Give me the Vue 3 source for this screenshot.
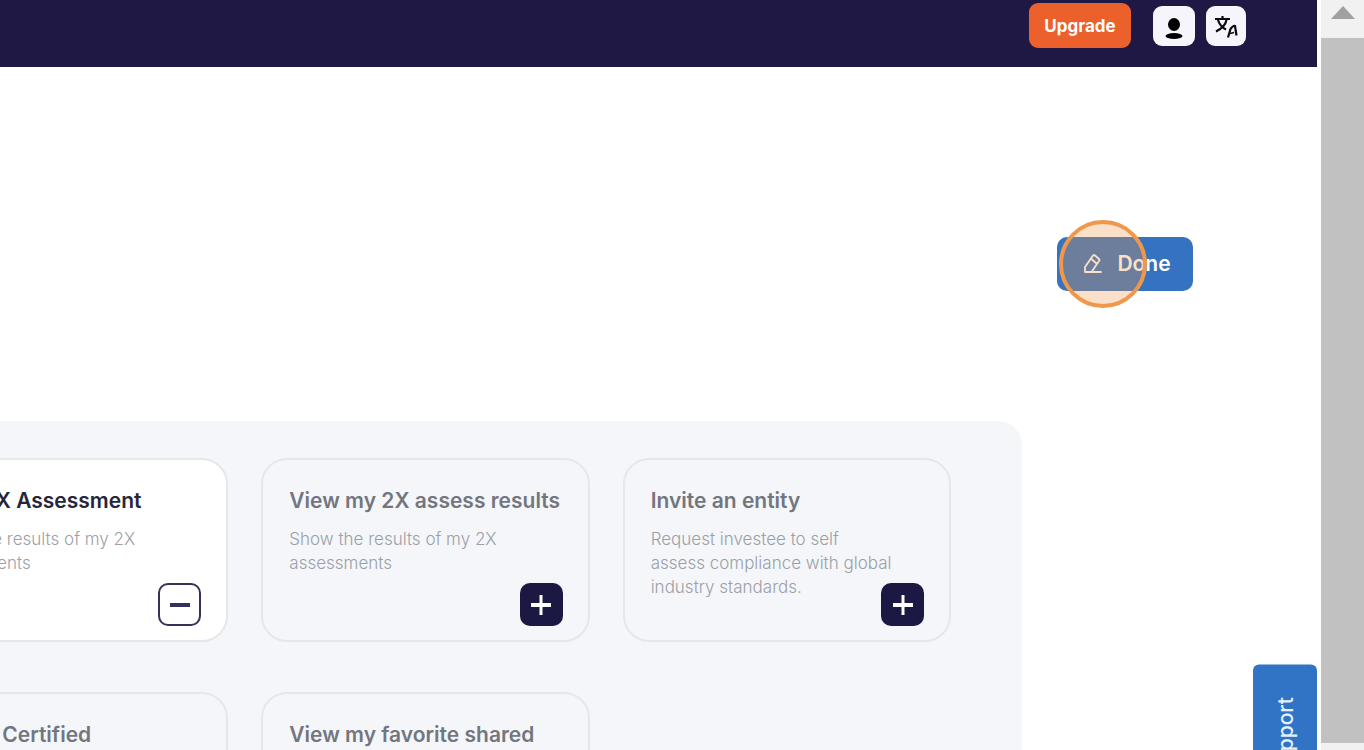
<template>
  <div class="window">
    <div class="app">
      <header class="topbar">
        <button class="upgrade" type="button">Upgrade</button>
        <button class="icon-btn profile" type="button" aria-label="Profile">
          <svg width="20" height="26" viewBox="0 0 20 26">
            <ellipse cx="10" cy="9.5" rx="6" ry="6.5" />
            <ellipse cx="10" cy="21" rx="8.5" ry="3" />
          </svg>
        </button>
        <button class="icon-btn" type="button" aria-label="Language">
          <svg width="26" height="26" viewBox="0 0 26 26" fill="none" stroke="#0b0b0f">
            <path d="M2 6h15M9.500 3v3M5 7c1.500 5 5 8 8 9.500M13.500 7C12.500 12 8 16 3 18.500" stroke-width="2.2" />
            <path d="M15 24.500l2.500-8.500q3-4 4.500-3l1.500 9.500" stroke-width="2.2" />
            <path d="M17 20.500l4-1" stroke-width="1.6" />
          </svg>
        </button>
      </header>

      <main class="content">
        <div class="toolbar">
          <div class="done-wrap">
            <button class="done" type="button" @click="editing = !editing">
              <svg width="20" height="22" viewBox="0 0 20 22" fill="none" stroke="currentColor" stroke-width="1.8" stroke-linejoin="round" stroke-linecap="round">
                <path d="M2 20v-5L10 3.500q1-1 2 0l4 3.500q1 1 0 2L8.500 20zM8.500 7l5 4.500M8.500 20H18" />
              </svg>
              <span>Done</span>
            </button>
            <span class="click-ring"></span>
          </div>
        </div>

        <section class="panel">
          <article v-for="card in cards" :key="card.title" class="card" :class="{ selected: card.selected }">
            <h2>{{ card.title }}</h2>
            <p>{{ card.text }}</p>
            <button
              class="toggle"
              type="button"
              :aria-label="card.selected ? 'Remove' : 'Add'"
              @click="card.selected = !card.selected"
            >
              <svg width="20" height="20" viewBox="0 0 20 20" fill="none" stroke="currentColor" stroke-width="4">
                <path d="M0 10h20" />
                <path v-if="!card.selected" d="M10 0v20" stroke-width="3" />
              </svg>
            </button>
          </article>
        </section>
      </main>

      <button class="support" type="button">Support</button>
    </div>

    <div class="scrollbar">
      <svg class="arrow" width="26" height="14" viewBox="0 0 26 14"><path d="M13 0l12 13H1z" fill="#a0a0a0" /></svg>
      <div class="thumb"></div>
    </div>
  </div>
</template>

<script setup>
import { ref } from 'vue'

const editing = ref(true)

const cards = ref([
  { title: 'Start 2X Assessment', text: 'Show the results of my 2X\nassessments', selected: true },
  { title: 'View my 2X assess results', text: 'Show the results of my 2X\nassessments', selected: false },
  { title: 'Invite an entity', text: 'Request investee to self\nassess compliance with global\nindustry standards.', selected: false },
  { title: 'Get 2X Certified', text: '', selected: false },
  { title: 'View my favorite shared', text: '', selected: false }
])
</script>

<style>
body {
  margin: 0;
  background: #fff;
}
</style>

<style scoped>
.window {
  display: flex;
  height: 100vh;
  overflow: hidden;
  font-family: Inter, "Open Sans", sans-serif;
}

.window * {
  box-sizing: border-box;
}

button {
  font-family: inherit;
  border: 0;
  padding: 0;
  cursor: pointer;
}

.app {
  position: relative;
  flex: 1;
  min-width: 0;
  margin-right: 4px;
  overflow: hidden;
}

/* header */
.topbar {
  display: flex;
  align-items: center;
  justify-content: flex-end;
  height: 67px;
  padding: 0 71px 16px 0;
  background: #1f1744;
}

.upgrade {
  width: 102px;
  height: 45px;
  margin-right: 22px;
  border-radius: 9px;
  background: #ec602b;
  color: #fff;
  font-size: 17px;
  font-weight: 700;
}

.icon-btn {
  display: flex;
  align-items: center;
  justify-content: center;
  width: 40px;
  height: 40px;
  border-radius: 9px;
  background: #f5f5fb;
}

.profile {
  width: 42px;
  margin-right: 11px;
  padding-top: 4px;
}

/* done button */
.toolbar {
  display: flex;
  justify-content: flex-end;
  padding: 170px 124px 130px 0;
}

.done-wrap {
  position: relative;
}

.done {
  display: flex;
  align-items: center;
  justify-content: center;
  gap: 14px;
  width: 136px;
  height: 54px;
  padding: 0 0 2px 4px;
  border-radius: 10px;
  background: #3572c0;
  color: #fff;
  font-size: 21px;
  font-weight: 600;
}

.click-ring {
  position: absolute;
  top: -17px;
  left: 2px;
  width: 88px;
  height: 88px;
  border: 4px solid #ef974a;
  border-radius: 50%;
  background: rgba(239, 151, 74, 0.3);
  pointer-events: none;
}

/* cards */
.panel {
  display: grid;
  grid-template-columns: repeat(3, 1fr);
  gap: 50px 33px;
  margin: 0 295px 0 -171px;
  padding: 37px 71px;
  border-radius: 24px;
  background: #f4f6fa;
}

.card {
  position: relative;
  min-height: 184px;
  padding: 26px 25px 14px 26px;
  border: 2px solid #e6e7eb;
  border-radius: 26px;
}

.card.selected {
  background: #fff;
}

h2 {
  margin: 0;
  color: #73767e;
  font-size: 21px;
  font-weight: 600;
  line-height: 30px;
  white-space: nowrap;
}

.selected h2 {
  color: #25263a;
}

p {
  margin: 11px 0 0;
  color: #9c9fa6;
  font-size: 17px;
  font-weight: 300;
  line-height: 24px;
  white-space: pre;
}

.toggle {
  position: absolute;
  right: 25px;
  bottom: 14px;
  display: flex;
  align-items: center;
  justify-content: center;
  width: 43px;
  height: 43px;
  border-radius: 10px;
  background: #1b1843;
  color: #fff;
}

.selected .toggle {
  border: 2px solid #35325a;
  background: #fff;
  color: #35325a;
}

/* support tab on the right edge */
.support {
  position: absolute;
  top: 664px;
  right: 0;
  width: 64px;
  padding: 33px 0;
  border-radius: 0 0 6px 6px;
  background: #3173c4;
  color: #e4f1ff;
  font-size: 21px;
  font-weight: 500;
  writing-mode: vertical-rl;
  transform: rotate(180deg);
}

/* scrollbar */
.scrollbar {
  display: flex;
  flex-direction: column;
  align-items: center;
  width: 43px;
  padding-bottom: 7px;
  background: #f1f1f1;
}

.arrow {
  margin: 6px 0 18px;
  flex: none;
}

.thumb {
  flex: 1;
  width: 100%;
  background: #c1c1c1;
}
</style>
